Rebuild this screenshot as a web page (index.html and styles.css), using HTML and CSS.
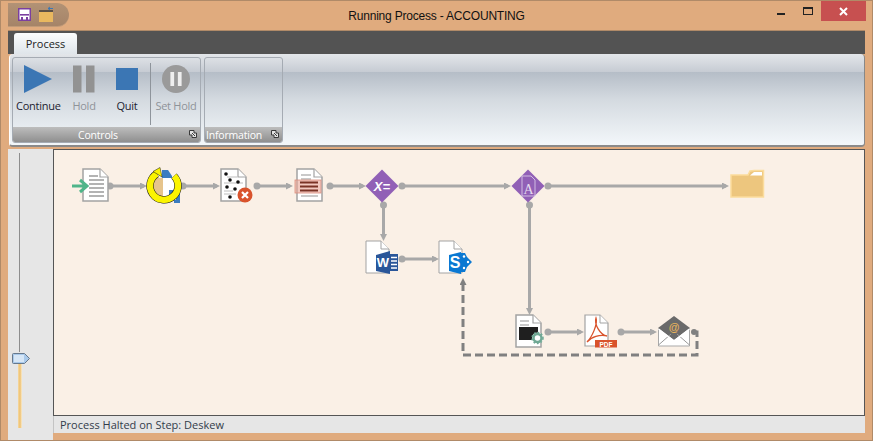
FILE: index.html
```html
<!DOCTYPE html>
<html>
<head>
<meta charset="utf-8">
<title>Running Process - ACCOUNTING</title>
<link rel="stylesheet" href="styles.css">
</head>
<body>
<div class="window">
  <header class="titlebar">
    <div class="qat">
      <svg class="qat-save" viewBox="0 0 13 13" width="13" height="13"><rect x=".75" y=".75" width="11.5" height="11.5" fill="#fff" stroke="#7b3fa0" stroke-width="1.5"/><rect x="2" y="6" width="9" height="1.6" fill="#7b3fa0"/><rect x="3" y="9" width="2" height="3" fill="#7b3fa0"/><rect x="8" y="9" width="2" height="3" fill="#7b3fa0"/></svg>
      <svg class="qat-open" viewBox="0 0 15 16" width="15" height="16"><path d="M0 4h6l1 1h7v11H0z" fill="#e9b85f"/><rect x="0" y="4" width="14" height="2" fill="#5d5146"/><path d="M9 2.500h5M9 2.500l2-1.500M9 2.500l2 1.500" stroke="#3b77b5" fill="none"/></svg>
    </div>
    <div class="title">Running Process - ACCOUNTING</div>
    <div class="controls">
      <span class="ctl-min"></span>
      <span class="ctl-max"></span>
      <span class="ctl-close"><svg viewBox="0 0 9 9" width="9" height="9"><path d="M1 1l7 7M8 1l-7 7" stroke="#fff" stroke-width="2"/></svg></span>
    </div>
  </header>

  <div class="client">
    <div class="tabstrip"><div class="tab">Process</div></div>
    <div class="ribbon">
      <section class="group group-controls">
        <div class="group-body">
          <div class="rbtn rbtn-continue">
            <svg viewBox="0 0 28 28" width="28" height="28"><path d="M0 0L28 14L0 28z" fill="#3b76b4"/></svg>
            <span>Continue</span>
          </div>
          <div class="rbtn rbtn-hold off">
            <svg viewBox="0 0 22 27" width="22" height="27"><rect width="8.500" height="27" fill="#929292"/><rect x="13" width="8.500" height="27" fill="#929292"/></svg>
            <span>Hold</span>
          </div>
          <div class="rbtn rbtn-quit">
            <svg viewBox="0 0 22 22" width="22" height="22"><rect width="22" height="22" fill="#3b76b4"/></svg>
            <span>Quit</span>
          </div>
          <div class="rsep"></div>
          <div class="rbtn rbtn-sethold off">
            <svg viewBox="0 0 30 30" width="30" height="30"><circle cx="15" cy="15" r="15" fill="#9a9a9a"/><rect x="9" y="7.500" width="4" height="15" fill="#eee"/><rect x="17" y="7.500" width="4" height="15" fill="#eee"/></svg>
            <span>Set Hold</span>
          </div>
        </div>
        <footer class="group-foot"><span>Controls</span><svg class="launcher" viewBox="0 0 8 8" width="8" height="8"><path d="M.5.500H5V3H7.500V7.500H3V5H.5z" fill="#e4e4e4" stroke="#3a3a3a" stroke-width="1"/><path d="M3 3L6 6" stroke="#3a3a3a"/></svg></footer>
      </section>
      <section class="group group-info">
        <div class="group-body"></div>
        <footer class="group-foot"><span>Information</span><svg class="launcher" viewBox="0 0 8 8" width="8" height="8"><path d="M.5.500H5V3H7.500V7.500H3V5H.5z" fill="#e4e4e4" stroke="#3a3a3a" stroke-width="1"/><path d="M3 3L6 6" stroke="#3a3a3a"/></svg></footer>
      </section>
    </div>

    <div class="main">
      <aside class="sidebar">
        <div class="track"></div>
        <div class="thumb"><svg viewBox="0 0 18 11" width="18" height="11"><path d="M.5 1.500q0-1 1-1h11l5 5-5 5h-11q-1 0-1-1z" fill="#a9c9ea" stroke="#66788c"/><rect x="2" y="2" width="10" height="7" fill="#d6e6f6"/></svg></div>
        <div class="track-fill"></div>
      </aside>
      <div class="stage">
        <div class="canvas">
          <svg class="diagram" viewBox="54 150 810 265" width="810" height="265">
            <defs>
              <path id="sheet" d="M0 0H17L25 8V32H0z" fill="#fff" stroke="#a3a3a3" stroke-width="1.500"/>
              <path id="fold" d="M17 0V8H25" fill="#fff" stroke="#a3a3a3" stroke-width="1.200"/>
              <marker id="arr" markerWidth="7" markerHeight="7" refX="4" refY="3.500" orient="auto" markerUnits="userSpaceOnUse"><path d="M0 0L7 3.500L0 7z" fill="#a8a8a8"/></marker>
              <marker id="arrd" markerWidth="8" markerHeight="7" refX="4" refY="3.500" orient="auto" markerUnits="userSpaceOnUse"><path d="M0 0L7 3.500L0 7z" fill="#808080"/></marker>
            </defs>

            <!-- connectors -->
            <g class="wire">
              <path d="M110 186H144" marker-end="url(#arr)"/><circle cx="110" cy="186" r="3.500"/>
              <path d="M183 186H217" marker-end="url(#arr)"/><circle cx="183" cy="186" r="3.500"/>
              <path d="M257 186H290" marker-end="url(#arr)"/><circle cx="257" cy="186" r="3.500"/>
              <path d="M330 186H363" marker-end="url(#arr)"/><circle cx="330" cy="186" r="3.500"/>
              <path d="M402 186H508" marker-end="url(#arr)"/><circle cx="402" cy="186" r="3.500"/>
              <path d="M548 186H726" marker-end="url(#arr)"/><circle cx="548" cy="186" r="3.500"/>
              <path d="M383.500 205V238" marker-end="url(#arr)"/><circle cx="383.500" cy="205" r="3.500"/>
              <path d="M402 259H436" marker-end="url(#arr)"/><circle cx="402" cy="259" r="3.500"/>
              <path d="M529.500 205V312" marker-end="url(#arr)"/><circle cx="529.500" cy="205" r="3.500"/>
              <path d="M548 332H581" marker-end="url(#arr)"/><circle cx="548" cy="332" r="3.500"/>
              <path d="M621 332H654" marker-end="url(#arr)"/><circle cx="621" cy="332" r="3.500"/>
            </g>
            <path d="M694 332H697V355H463V281" class="dash" marker-end="url(#arrd)"/>
            <circle cx="694" cy="332" r="3" fill="#808080"/>

            <!-- import -->
            <g transform="translate(83,169)">
              <use href="#sheet"/><use href="#fold"/>
              <path d="M6 7H15M6 11H21M6 15H21M6 19H21M6 23H21M6 27H21" stroke="#9a9a9a" stroke-width="1.500"/>
            </g>
            <path d="M72 186H85M80 180L87 186L80 192" fill="none" stroke="#4fb58a" stroke-width="3"/>

            <!-- deskew -->
            <g>
              <path d="M162 170H168L172 176V178H162z" fill="#3b7cc0"/>
              <path d="M174 186H180V203H174z" fill="#3b7cc0"/>
              <path d="M153 178H163V197H153z" fill="#e6c48c"/>
              <path d="M163 178H176V200H163z" fill="#fff"/>
              <path d="M169 190H173V201H169z" fill="#3b7cc0"/>
              <path d="M157 173.700A14 14 0 1 0 174 176" fill="none" stroke="#111" stroke-width="7.400"/>
              <path d="M157 173.700A14 14 0 1 0 174 176" fill="none" stroke="#fbf400" stroke-width="6.400"/>
              <path d="M153 171.500L160 167.500L162 177z" fill="#fbf400" stroke="#111" stroke-width=".5"/>
            </g>

            <!-- despeckle -->
            <g transform="translate(221,169)">
              <use href="#sheet"/><use href="#fold"/>
              <path d="M6 8H16M3 14H22M3 22H12M3 25H15" stroke="#bdbdbd"/>
              <g fill="#111"><circle cx="5" cy="5" r="1.800"/><circle cx="9" cy="11" r="1.800"/><circle cx="17" cy="13" r="1.800"/><circle cx="6" cy="18" r="1.800"/><circle cx="14" cy="20" r="1.800"/><circle cx="9" cy="28" r="1.800"/></g>
            </g>
            <circle cx="245" cy="195" r="7.500" fill="#d9532c"/>
            <path d="M242 192l6 6M248 192l-6 6" stroke="#fff" stroke-width="2.200"/>

            <!-- zone -->
            <g transform="translate(297,169)">
              <use href="#sheet"/><use href="#fold"/>
              <path d="M4 6H14M4 10H14" stroke="#b8b8b8" stroke-width="1.500"/>
              <rect x="-2" y="11" width="26" height="13" fill="#e9a596" fill-opacity=".6" stroke="#d98d7d" stroke-width=".8"/>
              <path d="M3 13.500H21M3 17.500H21M3 21.500H21" stroke="#7a3326" stroke-width="1.800"/>
              <path d="M4 27H21" stroke="#b8b8b8" stroke-width="1.500"/>
            </g>

            <!-- decision diamonds -->
            <path d="M382 169.500L398.500 186L382 202.500L365.500 186z" fill="#9160b6"/>
            <text x="382" y="191" class="dtext">X=</text>
            <path d="M528 169.500L544.500 186L528 202.500L511.500 186z" fill="#9160b6"/>
            <path d="M522 176H531L535 180V196H522z" fill="none" stroke="#d9c7e8" stroke-width=".9"/>
            <text x="528.500" y="194" class="atext">A</text>

            <!-- folder -->
            <path d="M750 171L754 170.500H763.500V197H731V175H748z" fill="#edc67e" stroke="#fbdc9c" stroke-width="1.500"/>
            <path d="M750 175.500L754 172H762V175.500z" fill="#fff"/>

            <!-- word -->
            <g transform="translate(366,241)">
              <path d="M0 0H15L23 8V32H0z" fill="#fff" stroke="#a3a3a3" stroke-width="1"/>
              <path d="M15 0V8H23" fill="#fff" stroke="#a3a3a3"/>
            </g>
            <path d="M376 255L390 251V274L376 271z" fill="#2a5699"/>
            <rect x="390" y="254" width="8" height="17" fill="#2a5699"/>
            <path d="M391 257.500H397M391 261H397M391 264.500H397M391 268H397" stroke="#fff" stroke-width="1.300"/>
            <text x="383" y="267" class="wtext">W</text>

            <!-- sharepoint -->
            <g transform="translate(439,241)">
              <path d="M0 0H15L23 8V32H0z" fill="#fff" stroke="#a3a3a3" stroke-width="1"/>
              <path d="M15 0V8H23" fill="#fff" stroke="#a3a3a3"/>
            </g>
            <path d="M449 255L461 252V274L449 271z" fill="#0a78d2"/>
            <path d="M461 253H465L467 257L472 262L467 267L465 272H461z" fill="#0a78d2"/>
            <circle cx="464" cy="256.500" r="1.200" fill="#fff"/><circle cx="468" cy="262" r="1.200" fill="#fff"/><circle cx="464" cy="268" r="1.200" fill="#fff"/>
            <text x="455" y="268" class="stext">S</text>

            <!-- report -->
            <g transform="translate(516,315)">
              <use href="#sheet"/><use href="#fold"/>
              <path d="M4 6H13M4 10H13" stroke="#b8b8b8" stroke-width="1.300"/>
              <rect x="3" y="12" width="19" height="13" fill="#1f1f1f"/>
            </g>
            <circle cx="537.500" cy="338" r="5.500" fill="#fff"/>
            <circle cx="537.500" cy="338" r="4" fill="none" stroke="#6fa894" stroke-width="2.500"/>
            <circle cx="537.500" cy="338" r="5.500" fill="none" stroke="#6fa894" stroke-width="1.500" stroke-dasharray="1.800 1.800"/>

            <!-- pdf -->
            <g transform="translate(585,315)">
              <path d="M0 0H15L23 8V31H0z" fill="#fff" stroke="#a3a3a3" stroke-width="1.200"/>
              <path d="M15 0V8H23" fill="#fff" stroke="#a3a3a3"/>
              <path d="M2 27C7 22 13 9 11 3C9 9 15 20 22 21C15 19 6 22 2 27z" fill="none" stroke="#d9532c" stroke-width="1.300"/>
            </g>
            <rect x="595" y="340" width="22" height="7.500" fill="#d9532c"/>
            <text x="606" y="346.500" class="ptext">PDF</text>

            <!-- email -->
            <path d="M658.500 329L674 317L689.500 329V346H658.500z" fill="#fff" stroke="#a9a9a9"/>
            <path d="M658 328L674 316L690 328L674 340z" fill="#6a6a6a"/>
            <path d="M658.500 345L671 334M689.500 345L677 334" stroke="#9a9a9a"/>
            <path d="M658.500 329L674 341L689.500 329" fill="none" stroke="#fff" stroke-width="1.500"/>
            <text x="674" y="331" class="etext">@</text>
          </svg>
        </div>
        <div class="status">Process Halted on Step: Deskew</div>
      </div>
    </div>
  </div>
</div>
</body>
</html>
```
FILE: styles.css
```css
* { box-sizing: border-box; }
html, body { margin: 0; height: 100%; }
body { font-family: "Open Sans", "Liberation Sans", sans-serif; font-size: 11px; background: #e0ab7e; overflow: hidden; }

.window { width: 873px; height: 441px; display: flex; flex-direction: column; border: 1px solid #b08a68; background: #e0ab7e; }

.titlebar { height: 29px; display: flex; align-items: flex-start; flex: none; position: relative; }
.qat { width: 61px; height: 24px; margin: 2px 0 0 7px; background: linear-gradient(#b29275, #a58468); border-radius: 0 13px 13px 0; display: flex; align-items: center; gap: 8px; padding-left: 10px; border-bottom: 1px solid #c09a78; flex: none; }
.qat-open { margin-top: -2px; }
.title { position: absolute; left: 0; right: 0; top: 8px; text-align: center; font-family: "Liberation Sans", sans-serif; font-size: 12px; letter-spacing: -.2px; color: #111; }
.controls { margin-left: auto; display: flex; align-items: flex-start; }
.ctl-min { width: 8px; height: 2px; background: #222; margin: 12px 18px 0 0; }
.ctl-max { width: 10px; height: 8px; border: 1px solid #222; border-top-width: 2px; margin: 6px 8px 0 0; }
.ctl-close { width: 45px; height: 20px; background: #c75050; display: flex; align-items: center; justify-content: center; margin-right: 6px; }

.client { flex: 1; margin: 0 7px; display: flex; flex-direction: column; border-top: 1px solid #b08a68; min-height: 0; }

.tabstrip { height: 23px; background: #535353; padding: 2px 0 0 6px; flex: none; }
.tab { width: 63px; height: 21px; background: linear-gradient(#fbfdfe, #dfe5ea); border-radius: 3px 3px 0 0; text-align: center; line-height: 21px; font-size: 11px; color: #222; }

.ribbon { height: 93px; flex: none; margin-left: 1px; display: flex; gap: 3px; padding: 3px 2px; border-radius: 4px; border: 1px solid #fff; border-right-color: #888; border-bottom: 2px solid #8a8a8a; border-top: none; background: linear-gradient(#e3e6ea 0, #c6cbd3 18px, #b5bdc7 18px, #d4dae0 50%, #f3f7fa 100%); }

.group { height: 86px; border: 1px solid #a5abb3; border-radius: 3px; display: flex; flex-direction: column; overflow: hidden; flex: none; }
.group-controls { width: 189px; }
.group-info { width: 79px; }
.group-body { flex: 1; display: flex; padding: 7px 0 0 3px; min-height: 0; }
.group-foot { height: 15px; flex: none; background: linear-gradient(#bdbdbd, #8f8f8f); color: #fff; font-size: 10.500px; letter-spacing: -.2px; line-height: 17px; display: flex; position: relative; }
.group-controls .group-foot span { margin-left: 65px; }
.group-info .group-foot span { margin-left: 1px; }
.launcher { position: absolute; right: 3px; top: 3px; }

.rbtn { display: flex; flex-direction: column; align-items: center; font-size: 11px; letter-spacing: -.25px; color: #1c2230; flex: none; position: relative; }
.rbtn svg { height: 28px; }
.rbtn span { position: absolute; top: 33px; left: 0; right: 0; text-align: center; white-space: nowrap; }
.off { color: #8f9399; }
.rbtn-continue { width: 44px; }
.rbtn-hold { width: 48px; }
.rbtn-quit { width: 38px; }
.rbtn-sethold { width: 50px; }
.rsep { width: 1px; height: 62px; margin: -2px 0 0 4px; background: #8e949b; flex: none; }

.main { flex: 1; display: flex; min-height: 0; margin-top: 2px; }
.sidebar { width: 45px; flex: none; background: #e6e6e6; position: relative; }
.track { position: absolute; left: 11px; top: 4px; width: 1px; height: 199px; background: #8d8d8d; }
.thumb { position: absolute; left: 4px; top: 204px; height: 11px; z-index: 1; line-height: 0; }
.track-fill { position: absolute; left: 10px; top: 215px; width: 4px; height: 64px; background: linear-gradient(90deg, #f6d9a2, #eec06e 50%, #f8ebd0); }

.stage { flex: 1; display: flex; flex-direction: column; min-width: 0; }
.canvas { height: 267px; flex: none; background: #faf0e6; border: 1px solid #555; line-height: 0; }
.diagram { display: block; }
.wire path { stroke: #a8a8a8; stroke-width: 3; fill: none; }
.wire circle { fill: #a8a8a8; }
.dash { fill: none; stroke: #808080; stroke-width: 3; stroke-dasharray: 8 4; }

.dtext { font: italic bold 13px "Liberation Sans", sans-serif; fill: #fff; text-anchor: middle; }
.atext { font: 14px "Liberation Serif", serif; fill: #e6dbef; text-anchor: middle; }
.wtext { font: bold 13px "Liberation Sans", sans-serif; fill: #fff; text-anchor: middle; }
.stext { font: bold 16px "Liberation Sans", sans-serif; fill: #fff; text-anchor: middle; }
.ptext { font: bold 6.500px "Liberation Sans", sans-serif; fill: #fff; text-anchor: middle; }
.etext { font: bold 11px "Liberation Sans", sans-serif; fill: #e6b25c; text-anchor: middle; }

.status { height: 17px; flex: none; background: #e6e6e6; border-left: 1px solid #c4c4c4; padding-left: 6px; font-size: 11px; line-height: 17px; color: #333c4a; }
```
